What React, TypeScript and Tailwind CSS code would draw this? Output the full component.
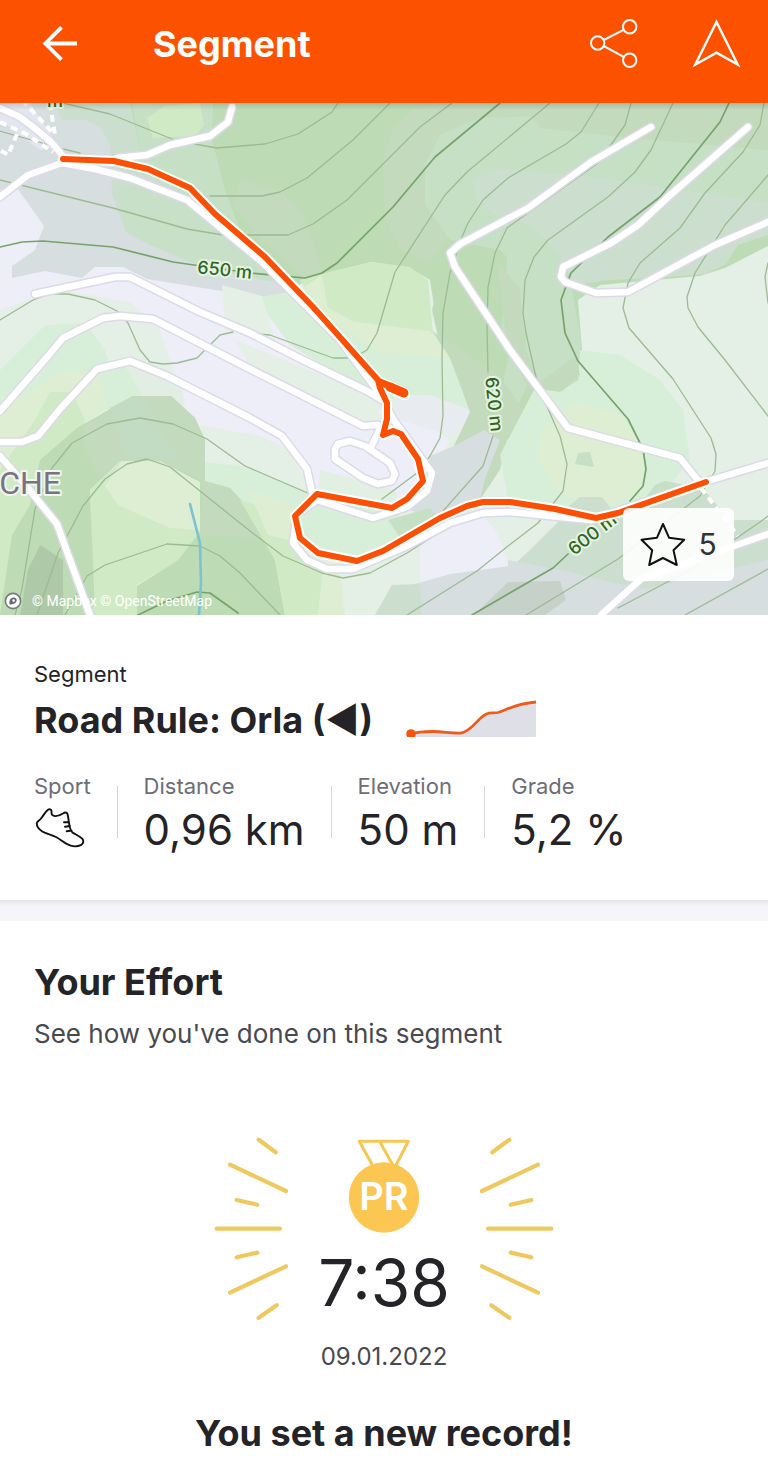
import type { ReactNode } from 'react';

type Shape = { points: string; fill: string };

const areas: Shape[] = [
  // lilac open ground
  { points: '0,180 60,190 130,250 260,280 300,330 340,400 420,420 450,440 420,500 330,500 270,430 190,400 120,300 0,310', fill: '#eeeef8' },
  // upper left built-up land
  { points: '0,103 140,103 200,180 300,285 280,299 240,294 147,279 123,267 95,267 82,278 45,271 12,278 12,266 35,250 44,226 15,185 0,190', fill: '#d6dedf' },
  { points: '0,103 30,103 58,145 40,150 0,120', fill: '#e4e6ef' },
  { points: '55,103 140,103 215,180 300,285 210,268 150,245 126,232 112,195 110,145 100,127 85,120 62,120', fill: '#ccdfce' },
  // forest across the top
  { points: '130,103 768,103 768,246 725,268 700,276 600,285 578,300 582,350 578,390 540,400 508,440 455,395 440,345 430,280 410,268 372,262 330,272 285,290 240,240 180,180 140,150', fill: '#bddcb5' },
  { points: '132,103 213,103 212,140 225,190 240,230 228,250 185,200 140,150', fill: '#c5e0c5' },
  { points: '180,200 240,232 300,285 262,280 205,268 150,245 126,232 118,190 150,180', fill: '#c8dfc8' },
  { points: '147,118 165,106 200,103 204,125 195,136 153,138', fill: '#cfeac5' },
  { points: '240,180 280,190 303,215 312,240 322,272 305,278 262,240 232,205', fill: '#c3dabd' },
  { points: '395,125 415,108 460,103 560,103 548,150 500,190 445,240 430,262 400,250 385,215 383,155', fill: '#c3dabd' },
  { points: '425,165 440,135 480,118 560,115 620,130 768,150 768,210 600,230 530,280 500,250 450,240 425,205', fill: '#c5e0c5' },
  { points: '520,103 768,103 768,150 620,137 540,128', fill: '#c3dabd' },
  { points: '473,180 500,169 600,178 680,190 768,203 768,235 738,245 726,264 705,274 665,277 610,280 575,285 558,255 530,225 505,218 478,205', fill: '#ccdfce' },
  { points: '510,222 532,226 558,252 572,290 581,340 576,388 560,392 530,380 500,440 470,425 500,350', fill: '#c5e0c5' },
  { points: '440,280 470,275 510,350 495,420 450,390 432,310', fill: '#bddcb5' },
  { points: '497,260 520,290 526,350 540,382 530,392 508,350', fill: '#c3dabd' },
  // meadow beside the trail
  { points: '322,274 372,262 410,267 428,280 433,335 455,358 400,370 330,330 300,280', fill: '#cfeac5' },
  { points: '322,275 328,308 355,322 430,331 450,355 470,420 400,390 320,320 300,290', fill: '#deeed3' },
  { points: '255,298 300,290 330,320 380,352 455,358 470,390 470,412 430,395 380,400 290,345', fill: '#d7efd9' },
  { points: '222,285 262,296 275,340 250,335 225,330', fill: '#e4efe5' },
  { points: '395,396 430,395 470,410 462,435 430,430 395,418', fill: '#e8ecf1' },
  { points: '432,331 500,376 530,420 508,436 500,470 480,500 452,512 442,480 452,450 470,412 462,390 450,358', fill: '#c3dabd' },
  { points: '430,456 452,447 484,430 500,440 484,482 480,500 450,520 415,512 405,508 425,485', fill: '#d6dedf' },
  // lower left slopes
  { points: '0,310 60,290 130,302 160,330 180,390 120,400 0,480', fill: '#e4efe5' },
  { points: '0,370 45,325 85,323 105,350 120,400 60,440 0,430', fill: '#d7efd9' },
  { points: '0,410 60,372 100,370 130,400 80,420 40,480 0,500', fill: '#deeed3' },
  { points: '97,371 125,366 145,396 133,410 108,410', fill: '#d7efd9' },
  { points: '125,366 165,378 185,396 178,420 145,400', fill: '#e2eee4' },
  { points: '180,360 250,375 320,420 378,434 405,470 340,520 250,460 200,430 185,410', fill: '#eeeef8' },
  { points: '235,340 370,395 386,425 360,428 250,365', fill: '#e4efe5' },
  { points: '200,425 260,436 290,450 312,492 300,505 230,480 204,465', fill: '#e4efe5' },
  { points: '205,462 240,466 310,492 390,505 410,530 360,560 300,540 205,490', fill: '#d7efd9' },
  { points: '320,470 395,490 400,505 318,492', fill: '#e2efe3' },
  { points: '0,470 35,420 50,392 72,392 85,420 80,470 120,615 0,615', fill: '#cfeac5' },
  { points: '40,460 77,428 133,396 171,396 195,418 205,440 205,485 160,461 120,461 90,490 95,615 0,615 12,535 30,505', fill: '#bddcb5' },
  { points: '85,425 133,396 171,396 195,418 205,440 205,482 160,461 120,461 100,478 84,445', fill: '#c3dabd' },
  { points: '110,408 133,396 145,400 165,440 180,458 150,459 125,455', fill: '#c2dcc3' },
  { points: '90,490 120,461 160,461 200,484 200,535 178,560 137,585 137,615 92,615 96,580', fill: '#cfeac5' },
  { points: '105,486 122,461 155,461 200,482 200,530 170,528 118,505', fill: '#deeed3' },
  { points: '200,480 230,488 255,515 275,560 285,615 137,615 137,586 178,560 200,532', fill: '#bddcb5' },
  { points: '202,480 230,488 255,515 262,538 200,535', fill: '#c3dabd' },
  { points: '40,545 63,560 63,615 20,615 28,570', fill: '#adc9a8' },
  { points: '240,500 290,515 297,550 340,572 320,615 285,615 275,560', fill: '#cfeac5' },
  { points: '248,490 295,505 290,540 268,535', fill: '#deeed3' },
  { points: '322,575 350,568 355,615 318,615', fill: '#deeed3' },
  { points: '340,572 395,550 430,535 420,590 392,585 375,615 345,615', fill: '#e4efe5' },
  { points: '388,520 430,508 440,520 402,540', fill: '#c5e0c5' },
  { points: '420,545 480,513 510,545 508,570 430,590 420,580', fill: '#eeeef8' },
  { points: '375,615 392,585 412,585 450,574 510,566 600,560 768,560 768,615', fill: '#d6dedf' },
  { points: '375,615 392,585 420,584 422,615', fill: '#ccdfce' },
  // right hand slopes
  { points: '480,500 500,470 510,440 560,400 700,500 768,520 768,570 640,580 510,566 500,540', fill: '#e4efe5' },
  { points: '500,455 535,388 560,392 578,380 580,350 620,355 660,380 683,410 690,460 650,510 540,520 508,500', fill: '#d7efd9' },
  { points: '540,382 576,356 580,375 562,391 545,388', fill: '#c3dabd' },
  { points: '540,430 575,402 622,415 645,455 640,495 600,505 560,495 538,460', fill: '#deeed3' },
  { points: '578,453 590,452 594,467 575,464', fill: '#c5e0c5' },
  { points: '570,505 580,497 602,497 612,510 700,485 730,520 768,520 768,560 700,600 600,580 508,570 530,550 560,520', fill: '#ccdfce' },
  { points: '655,485 665,481 690,486 640,505', fill: '#c5e0c5' },
  { points: '508,560 570,572 640,590 768,560 768,615 508,615', fill: '#d6dedf' },
  { points: '508,582 560,581 566,600 545,615 474,615', fill: '#c5d1c9' },
];

const contours = [
  '0,131 63,149 80,153',
  '63,103 110,114 177,141 217,148 265,144 298,134 332,112 338,103',
  '210,196 262,196 280,192 307,178 353,140 390,103',
  '0,180 113,208 187,229 223,235 288,235 313,224 347,200 420,127 452,103',
  '550,103 467,172 445,195 395,272 377,333 367,350 353,358 333,358 270,335 257,334',
  '599,103 581,132 566,144 508,178 483,200 468,223 462,237 450,273 443,313 442,360 443,416 440,438 430,456 417,473 382,499',
  '631,103 625,125 598,163 570,183 507,228 495,253 488,287 487,327 488,372',
  '493,436 483,466 443,511',
  '673,103 651,150 635,172 608,197 548,240 534,257 525,280 523,313 526,333 538,386 560,436 567,464 563,491 538,523 508,546 477,571 407,615',
  '764,103 760,125 743,152 705,193 680,228 640,263 628,283 623,308 629,328 673,379 711,438 716,454 715,471 700,496 618,559 526,615',
  '768,175 725,225 695,273 687,297 688,308 698,327 725,360 768,416',
  '768,263 765,277 768,303',
  '768,516 760,522 690,570 618,608',
  '768,569 685,615',
  '0,320 33,300 50,294 68,294 95,300 117,311 128,323 140,350 150,362 163,364 177,363 197,358 220,335 233,332',
  '15,615 22,589 35,509 52,468 72,443 107,424 140,418 173,424 207,439 245,466 310,494',
  '37,615 58,553 83,506 105,479 127,464 147,459 170,467 250,531 283,556 322,573 343,578 370,573 407,553 443,530',
  '65,615 87,576 105,565 167,544 200,546 220,556 240,573 280,615',
];

const indexContours = [
  '0,247 22,242 43,241 113,247 173,262 250,273 305,278 322,273 337,263 393,207 435,157 500,103',
  '729,103 720,122 660,197 608,237 571,273 561,300 565,333 578,361 628,419 643,449 646,469 643,486 630,501',
  '472,615 508,594 553,568 568,554',
  '138,615 167,601 197,592 210,593 238,613',
];

const roads = [
  '0,108 20,117 37,130 52,143 62,155',
  '0,197 28,175 62,163 95,169 130,178 187,200 262,262 340,340 382,397 393,419 432,473 427,491 407,507 373,518 317,500 297,514 293,543 307,560 327,569 353,569 407,546 450,523 483,513 510,512 591,520 708,481 768,463',
  '117,158 147,155 170,145 210,136 228,122 232,107',
  '35,294 115,277 130,277 200,312 250,333 303,360 367,391 382,400',
  '0,411 48,356 63,338 103,318 120,316 153,319 250,369 363,426 378,425',
  '0,442 22,442 38,436 60,409 97,369 130,361 167,376 250,418 282,436 307,469 312,492',
  '0,456 32,493 57,524 90,615',
  '338,444 350,441 365,446 390,463 395,474 392,481 378,484 363,478 335,459 335,449 338,444',
  '380,429 370,449',
  '651,127 591,162 528,208 460,244 450,253 455,267 510,350 568,428 680,458 701,484',
  '748,127 668,197 638,225 611,243 563,267 561,277 565,282 596,293 628,292 715,245 768,222',
  '601,615 641,579 768,534',
];

const footpaths = [
  '0,122 26,134 53,152',
  '22,100 55,135',
  '50,103 55,135',
  '17,134 8,155 0,150',
  '701,488 738,536',
];

const route =
  '63,159 114,161 148,169 190,188 215,214 265,257 313,307 330,326 378,380 380,388 387,403 387,419 383,435 393,431 401,434 418,459 423,481 407,499 392,508 317,494 295,516 300,538 318,553 357,561 383,551 440,518 467,506 483,502 510,502 555,509 596,518 618,513 706,482';

function SegmentMap() {
  return (
    <svg viewBox="0 103 768 512" className="block w-full" role="img" aria-label="Segment map">
      <defs>
        <linearGradient id="barShadow" x1="0" y1="0" x2="0" y2="1">
          <stop offset="0" stopColor="#000" stopOpacity="0.14" />
          <stop offset="1" stopColor="#000" stopOpacity="0" />
        </linearGradient>
      </defs>
      <rect x="0" y="103" width="768" height="512" fill="#e4efe5" />
      {areas.map((area, index) => (
        <polygon key={index} points={area.points} fill={area.fill} />
      ))}
      <g fill="none" strokeLinejoin="round" strokeLinecap="round">
        <g stroke="#9cbb92" strokeWidth="1.3">
          {contours.map((points) => (
            <polyline key={points} points={points} />
          ))}
        </g>
        <g stroke="#76a36a" strokeWidth="1.7">
          {indexContours.map((points) => (
            <polyline key={points} points={points} />
          ))}
        </g>
        <polyline points="190,504 200,543 201,583 199,615" stroke="#7cc3cf" strokeWidth="2.6" />
        <g stroke="#dcdae9" strokeWidth="9.5">
          {roads.map((points) => (
            <polyline key={points} points={points} />
          ))}
        </g>
        <g stroke="#fff" strokeWidth="6.5">
          {roads.map((points) => (
            <polyline key={points} points={points} />
          ))}
        </g>
        <g stroke="#fff" strokeWidth="4" strokeDasharray="7 5" strokeLinecap="butt">
          {footpaths.map((points) => (
            <polyline key={points} points={points} />
          ))}
        </g>
      </g>
      <g
        fontFamily="Inter, sans-serif"
        textAnchor="middle"
        paintOrder="stroke"
        strokeLinejoin="round"
        fontWeight="500"
      >
        <g fill="#2f6626" stroke="#e6f3df" strokeWidth="4" fontSize="18">
          <text transform="translate(224 276) rotate(6)">650 m</text>
          <text transform="translate(488 405) rotate(84)">620 m</text>
          <text transform="translate(596 539) rotate(-38)">600 m</text>
          <text x="55" y="107">m</text>
        </g>
        <text x="61" y="494" fill="#77747f" stroke="#f2f5f0" strokeWidth="4" fontSize="32" fontFamily="Roboto, sans-serif" fontWeight="400" textAnchor="end">
          CHE
        </text>
      </g>
      <g fill="none" strokeLinejoin="round" strokeLinecap="round">
        <g stroke="#fff" strokeWidth="10">
          <polyline points={route} />
          <polyline points="380,383 404,394" strokeWidth="12" />
        </g>
        <g stroke="#fc4f06">
          <polyline points={route} strokeWidth="6" />
          <polyline points="380,382 392,387" strokeWidth="7" />
          <polyline points="390,387 404,393" strokeWidth="9" />
        </g>
      </g>
      <rect x="0" y="103" width="768" height="7" fill="url(#barShadow)" />
    </svg>
  );
}

function MapMark() {
  return (
    <svg viewBox="0 0 18 18" className="size-[18px]" aria-hidden="true">
      <circle cx="9" cy="9" r="7.6" fill="#fff" stroke="#777c80" strokeWidth="1.6" />
      <path d="M5.6 12.4c-.7-4 .9-6.6 3.7-6.9 2.2-.2 3.6 1.3 3.4 3.1-.2 2.5-2.9 4.2-7.1 3.8z" fill="#666b70" />
      <circle cx="9.6" cy="8.6" r="1.3" fill="#fff" />
    </svg>
  );
}

function BackIcon() {
  return (
    <svg viewBox="0 0 36 36" className="size-9" fill="none" stroke="currentColor" strokeWidth="3.8">
      <path d="M35 17.500H4M19.500 1.300 3.300 17.500l16.200 16.200" />
    </svg>
  );
}

function ShareIcon() {
  return (
    <svg viewBox="0 0 48 50" className="h-[50px] w-12" fill="none" stroke="currentColor" strokeWidth="2">
      <circle cx="7.7" cy="24" r="6.700" />
      <circle cx="39.7" cy="7.700" r="6.700" />
      <circle cx="39.7" cy="41.300" r="6.700" />
      <path d="M13.700 21 33.700 10.800M13.700 27l20 10.800" />
    </svg>
  );
}

function NavigateIcon() {
  return (
    <svg viewBox="0 0 50 50" className="size-[50px]" fill="none" stroke="currentColor" strokeWidth="2.4">
      <path d="M24.500 3 45.700 45.500 24.500 33.700 3.300 45.500z" />
    </svg>
  );
}

function StarIcon() {
  return (
    <svg viewBox="0 0 46 46" className="size-[46px]" fill="none" stroke="#111" strokeWidth="2" strokeLinejoin="round">
      <path d="M23 2 29 15.700 44.200 17.800 33.500 28.300 36.800 43 23 36 9.200 43l3-14.700L1.500 17.800 17 15.700z" />
    </svg>
  );
}

function ShoeIcon() {
  return (
    <svg viewBox="0 0 52 44" className="h-11 w-[52px]" fill="none" stroke="#111" strokeWidth="1.9" strokeLinecap="round" strokeLinejoin="round" role="img" aria-label="Run">
      <path d="M2.7 15.500C3 13.500 5 12.800 7 10.500 9.500 7.500 11 4 14 1.800c1.500-1 3.200-.5 3.500 1.200.2 1.500-.5 3 .8 4 3 2.200 7.500.5 10.700-1.500 1.500-1 3.800-1.700 4.500.5 1 3.500 1.300 9 2.200 13 .6 2.500 1 4.300 2.800 5.500 3 2 7 3.500 9.700 6.200 1.700 1.800 1.300 5-1 6.200-3 1.500-7.500 1.700-10.500.8-5.500-1.500-9.700-6-14.700-8.700-4.500-2.400-9.200-3-13.700-5.500C5.300 21.500 2.700 18.500 2.700 15.500zM30 14.200h5M31 18.800l5-.8M32.700 23.300l4.800-.8" />
    </svg>
  );
}

function ElevationChart() {
  const line = 'M6 34C13 31.500 20 31.500 28 31.500c10 0 18 2 28 1.500C68 31 74 15 84 13.200c3-.6 5 .2 9-.7C101 10.500 108 4 131 2';

  return (
    <svg viewBox="0 0 131 37" className="h-[37px] w-[131px]" role="img" aria-label="Elevation profile">
      <path d={`${line}V37H6z`} fill="#dfdfe8" />
      <path d={line} fill="none" stroke="#f25a18" strokeWidth="2.8" />
      <circle cx="6" cy="34" r="4.800" fill="#f2550f" />
    </svg>
  );
}

function Rays({ className = '' }: { className?: string }) {
  return (
    <svg viewBox="0 0 80 190" className={`h-[190px] w-20 ${className}`} fill="none" stroke="#efc960" strokeWidth="4.2" strokeLinecap="round" aria-hidden="true">
      <path d="M46.700 5.700 63.700 18.300M18 30.700 74 57M24.700 66l20.600 4.700M4.700 94.700H68M24.700 123.300l20.600-4.700M18 158.700 74 132.300M46.700 183.700 64.700 171.200" />
    </svg>
  );
}

function Medal() {
  return (
    <svg viewBox="0 0 72 95" className="h-[95px] w-[72px]" role="img" aria-label="Personal record">
      <path d="M26 30 11.300 3.300h49L46.500 30 31.500 3.300" fill="none" stroke="#f7c754" strokeWidth="3" strokeLinejoin="round" />
      <circle cx="36" cy="59.500" r="35.200" fill="#fbc652" />
      <text x="36" y="72" textAnchor="middle" fill="#fff" fontFamily="Inter, sans-serif" fontSize="38" fontWeight="600">
        PR
      </text>
    </svg>
  );
}

function Stat({ label, children }: { label: string; children: ReactNode }) {
  return (
    <div>
      <dt className="text-[22px] leading-7 text-[#6d6d78]">{label}</dt>
      <dd className="mt-2 h-11 text-[42px] leading-11 whitespace-nowrap">{children}</dd>
    </div>
  );
}

function Divider() {
  return <div className="h-[52px] w-px bg-[#d5d5da]" role="presentation" />;
}

export default function App() {
  return (
    <div className="min-h-screen bg-white font-['Inter',sans-serif] text-[#242428]">
      <header className="flex items-center bg-[#fc5200] px-[26px] pt-5 pb-[35px] text-white">
        <button type="button" aria-label="Back" className="flex h-12 w-[68px] items-center justify-center">
          <BackIcon />
        </button>
        <h1 className="ml-[59px] text-[36px] leading-10 font-bold">Segment</h1>
        <div className="ml-auto flex items-center gap-[54px]">
          <button type="button" aria-label="Share" className="flex h-12 items-center">
            <ShareIcon />
          </button>
          <button type="button" aria-label="Navigate" className="flex h-12 items-center">
            <NavigateIcon />
          </button>
        </div>
      </header>

      <section className="relative">
        <SegmentMap />
        <div className="absolute bottom-1 left-1 flex items-center gap-2.5 font-['Roboto',sans-serif] text-sm text-white">
          <MapMark />
          <p>
            <a href="#mapbox">© Mapbox</a> <a href="#openstreetmap">© OpenStreetMap</a>
          </p>
        </div>
        <button
          type="button"
          aria-label="Star segment"
          className="absolute right-[34px] bottom-[34px] flex h-[73px] w-[111px] items-center justify-center gap-3 rounded-md bg-white/90 text-[30px] text-[#333]"
        >
          <StarIcon />
          5
        </button>
      </section>

      <section className="px-[34px] pt-[45px] pb-12">
        <p className="text-[22px] leading-7">Segment</p>
        <div className="mt-3 flex items-start gap-8">
          <h2 className="text-[36px] leading-10 font-bold">Road Rule: Orla (◄)</h2>
          <ElevationChart />
        </div>
        <dl className="mt-8 flex items-center gap-[26px]">
          <Stat label="Sport">
            <ShoeIcon />
          </Stat>
          <Divider />
          <Stat label="Distance">0,96 km</Stat>
          <Divider />
          <Stat label="Elevation">50 m</Stat>
          <Divider />
          <Stat label="Grade">5,2 %</Stat>
        </dl>
      </section>

      <div className="h-[21px] bg-linear-to-b from-[#e4e4e8] via-[#f5f5f9] via-30% to-[#f6f6fa]" />

      <section className="px-[34px] pt-[41px] pb-4">
        <h2 className="text-[36px] leading-10 font-bold">Your Effort</h2>
        <p className="mt-3.5 text-[26px] leading-9 text-[#494950]">See how you've done on this segment</p>

        <div className="mt-[82px] flex items-start justify-center">
          <Rays />
          <div className="flex w-46 flex-col items-center pt-1">
            <Medal />
            <p className="mt-5 text-[64px] leading-[60px]">7:38</p>
            <p className="mt-7 text-[24px] leading-8 text-[#494950]">09.01.2022</p>
          </div>
          <Rays className="-scale-x-100" />
        </div>

        <h3 className="mt-10 text-center text-[36px] leading-10 font-bold">You set a new record!</h3>
      </section>
    </div>
  );
}
